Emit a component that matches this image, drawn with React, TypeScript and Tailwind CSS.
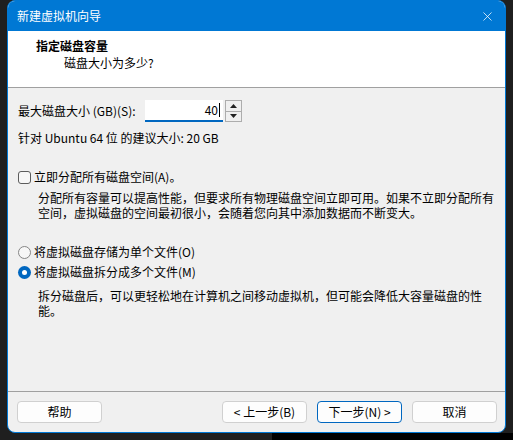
import { X } from "lucide-react";

const font = { fontFamily: '"Noto Sans CJK SC", "Noto Sans", sans-serif' };

function WinButton({ label, primary = false }: { label: string; primary?: boolean }) {
  return (
    <button
      className={`w-[85px] h-[22px] rounded-[4px] bg-[#fdfdfd] text-[12px] leading-none text-black border ${
        primary ? "border-[#0067c0]" : "border-[#d0d0d0]"
      }`}
    >
      {label}
    </button>
  );
}

function Radio({ checked }: { checked?: boolean }) {
  if (checked) {
    return (
      <span className="w-[13px] h-[13px] rounded-full bg-[#0067c0] flex items-center justify-center shrink-0">
        <span className="w-[5px] h-[5px] rounded-full bg-white" />
      </span>
    );
  }
  return <span className="w-[13px] h-[13px] rounded-full border border-[#858585] bg-[#f7f7f7] shrink-0" />;
}

export default function App() {
  return (
    <div className="w-[513px] h-[440px] bg-[#1f1f1f] flex flex-col overflow-hidden" style={font}>
      <div className="ml-[7px] w-[499px] h-[433px] shrink-0 rounded-[8px] border border-[#0078d4] bg-[#f0f0f0] flex flex-col overflow-hidden">
        {/* title bar */}
        <div className="h-[30px] bg-[#0078d4] flex items-center justify-between pl-[9px] pr-[10px] shrink-0">
          <span className="text-white text-[12px]">新建虚拟机向导</span>
          <X size={15} strokeWidth={1.2} color="#ffffff" />
        </div>

        {/* header */}
        <div className="h-[57px] bg-white border-b border-[#a0a0a0] pl-[28px] pt-[7px] shrink-0">
          <div className="text-[12px] font-bold leading-[16px] text-black">指定磁盘容量</div>
          <div className="text-[12px] leading-[16px] text-black pl-[28px] mt-[1px]">磁盘大小为多少?</div>
        </div>

        {/* body */}
        <div className="flex-1 pl-[10px] pr-[4px] pt-[12px] text-[12px] text-black whitespace-nowrap">
          <div className="flex items-center h-[22px]">
            <span className="w-[127px]">最大磁盘大小 (GB)(S):</span>
            <div className="w-[78px] h-[22px] bg-white border-b-2 border-[#0067c0] flex items-center justify-end pr-[3px]">
              <span>40</span>
              <span className="w-px h-[14px] bg-black ml-[1px]" />
            </div>
            <div className="ml-[2px] w-[17px] h-[22px] border border-[#adadad] flex flex-col bg-[#f0f0f0]">
              <div className="flex-1 flex items-center justify-center border-b border-[#adadad]">
                <svg width="7" height="4" viewBox="0 0 7 4"><path d="M3.5 0L7 4H0z" fill="#222" /></svg>
              </div>
              <div className="flex-1 flex items-center justify-center">
                <svg width="7" height="4" viewBox="0 0 7 4"><path d="M0 0h7L3.5 4z" fill="#222" /></svg>
              </div>
            </div>
          </div>

          <div className="mt-[8px] leading-[16px]">针对 Ubuntu 64 位 的建议大小: 20 GB</div>

          <div className="mt-[23px] flex items-center gap-[3px] h-[16px]">
            <span className="w-[13px] h-[13px] rounded-[3px] border border-[#5c5c5c] bg-[#f7f7f7] shrink-0" />
            <span>立即分配所有磁盘空间(A)。</span>
          </div>
          <div className="mt-[5px] pl-[20px] leading-[15px]">
            <div>分配所有容量可以提高性能，但要求所有物理磁盘空间立即可用。如果不立即分配所有</div>
            <div>空间，虚拟磁盘的空间最初很小，会随着您向其中添加数据而不断变大。</div>
          </div>

          <div className="mt-[22px] flex items-center gap-[3px] h-[20px]">
            <Radio />
            <span>将虚拟磁盘存储为单个文件(O)</span>
          </div>
          <div className="flex items-center gap-[3px] h-[20px]">
            <Radio checked />
            <span>将虚拟磁盘拆分成多个文件(M)</span>
          </div>
          <div className="mt-[6px] pl-[20px] leading-[15px]">
            <div>拆分磁盘后，可以更轻松地在计算机之间移动虚拟机，但可能会降低大容量磁盘的性</div>
            <div>能。</div>
          </div>
        </div>

        {/* footer */}
        <div className="h-[41px] border-t border-[#a0a0a0] shrink-0 flex items-start pt-[9px] pl-[9px] pr-[8px]">
          <WinButton label="帮助" />
          <div className="flex-1" />
          <div className="flex gap-[10px]">
            <WinButton label="< 上一步(B)" />
            <WinButton label="下一步(N) >" primary />
            <WinButton label="取消" />
          </div>
        </div>
      </div>
      <div className="flex-1 flex">
        <div className="w-[272px] bg-[#1f1f1f]" />
        <div className="flex-1 bg-black" />
      </div>
    </div>
  );
}
